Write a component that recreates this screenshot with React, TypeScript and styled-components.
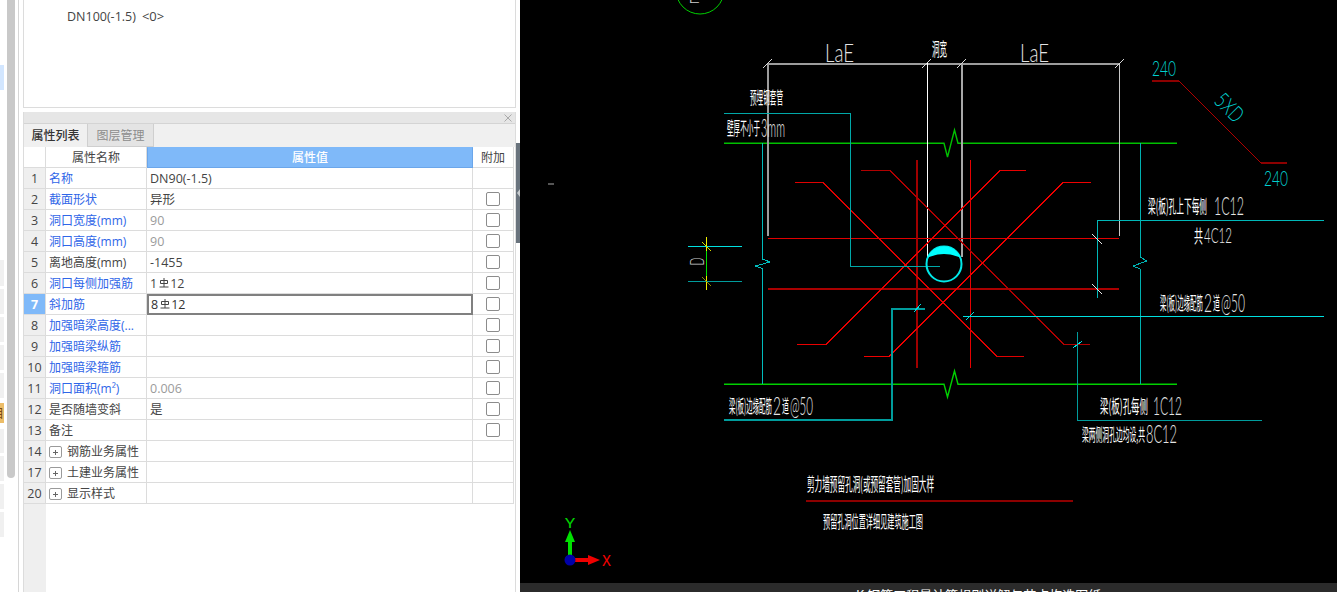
import React from "react";
import styled, { createGlobalStyle } from "styled-components";

const Global = createGlobalStyle`
  html, body { margin: 0; padding: 0; background: #fff; }
  #root { width: 1337px; height: 592px; overflow: hidden; }
`;

const UI_FONT = `"Open Sans", "Noto Sans CJK SC", sans-serif`;
const CJK_FONT = `"Noto Sans CJK SC", sans-serif`;
const THIN_FONT = `"Lato", "Liberation Sans", sans-serif`;

const Page = styled.div`
  display: flex;
  width: 1337px;
  height: 592px;
  overflow: hidden;
  font-family: ${UI_FONT};
  font-size: 12px;
  color: #444;
  background: #fff;
`;

const Rail = styled.div`
  width: 7px;
  height: 592px;
  flex: none;
  display: flex;
  flex-direction: column;
  overflow: hidden;
`;

const RailItem = styled.div<{ $h: number; $top?: number; $bg: string }>`
  width: 4px;
  flex: none;
  height: ${(p) => p.$h}px;
  margin-top: ${(p) => p.$top ?? 3}px;
  background: ${(p) => p.$bg};
  color: #7a4a10;
  font-family: ${CJK_FONT};
  font-size: 12px;
  line-height: 20px;
  overflow: hidden;
  direction: rtl;
`;

const ScrollThumb = styled.div`
  width: 8px;
  height: 478px;
  flex: none;
  background: #c9c9c9;
  border-radius: 0 0 4px 4px;
`;

const Rule = styled.div`
  width: 1px;
  height: 592px;
  flex: none;
  margin: 0 4px 0 3px;
  background: #d6d6d6;
`;

const Column = styled.div`
  width: 493px;
  flex: none;
  display: flex;
  flex-direction: column;
  height: 592px;
`;

const TreePanel = styled.div`
  height: 107px;
  flex: none;
  box-sizing: content-box;
  border: 1px solid #dcdcdc;
  border-top: 0;
  background: #fff;
`;

const TreeItem = styled.div`
  margin: 7px 0 0 43px;
  line-height: 18px;
  font-size: 12.5px;
  color: #444;
`;

const TreeBadge = styled.span`
  margin-left: 6px;
  font-size: 13px;
`;

const PropsPanel = styled.div`
  margin-top: 4px;
  flex: 1;
  min-height: 0;
  display: flex;
  flex-direction: column;
  border: 1px solid #dcdcdc;
  border-bottom: 0;
  border-top: 0;
`;

const TitleBar = styled.div`
  height: 11px;
  flex: none;
  background: #e6e6e6;
  border-bottom: 1px solid #d4d4d4;
  display: flex;
  justify-content: flex-end;
  align-items: center;
  padding-right: 3px;
`;

const TabBar = styled.div`
  height: 23px;
  flex: none;
  display: flex;
  background: #f0f0f0;
`;

const Tab = styled.div<{ $active?: boolean }>`
  box-sizing: border-box;
  width: ${(p) => (p.$active ? 64 : 66)}px;
  height: 23px;
  text-align: center;
  line-height: 22px;
  font-family: ${CJK_FONT};
  font-size: 12px;
  font-weight: ${(p) => (p.$active ? 500 : 400)};
  color: ${(p) => (p.$active ? "#333" : "#8c8c8c")};
  background: ${(p) => (p.$active ? "#f0f0f0" : "#e4e4e4")};
  border-right: 1px solid #cfcfcf;
  border-bottom: ${(p) => (p.$active ? "0" : "1px solid #cfcfcf")};
`;

const Table = styled.div`
  flex: 1;
  min-height: 0;
  display: flex;
  flex-direction: column;
`;

const Row = styled.div`
  display: grid;
  grid-template-columns: 22px 101px 326px 41px;
  height: 21px;
  flex: none;
`;

const Filler = styled.div`
  flex: 1;
  display: grid;
  grid-template-columns: 22px 1fr;
`;

const FillerIndex = styled.div`
  background: #efefef;
`;

const Cell = styled.div`
  box-sizing: border-box;
  height: 21px;
  border-right: 1px solid #dcdcdc;
  border-bottom: 1px solid #dcdcdc;
  line-height: 20px;
  white-space: nowrap;
  overflow: hidden;
  background: #fff;
`;

const IndexCell = styled(Cell)<{ $selected?: boolean; $blank?: boolean }>`
  text-align: center;
  background: ${(p) => (p.$blank ? "#fff" : p.$selected ? "#7fb9f9" : "#efefef")};
  color: ${(p) => (p.$selected ? "#fff" : "#444")};
  font-weight: ${(p) => (p.$selected ? 700 : 400)};
  font-size: 12.5px;
  line-height: 22px;
`;

const HeadCell = styled(Cell)`
  text-align: center;
  font-family: ${CJK_FONT};
  color: #444;
`;

const ValueHead = styled(HeadCell)`
  background: #7fb9f9;
  border: 1px solid #6ba6ea;
  border-top-color: #7fb9f9;
  color: #fff;
  font-weight: 500;
  line-height: 18px;
`;

const NameCell = styled(Cell)<{ $tone: "blue" | "dark" }>`
  padding: 2px 0 0 3px;
  display: flex;
  align-items: center;
  color: ${(p) => (p.$tone === "blue" ? "#2f66e8" : "#444")};
`;

const ValueCell = styled(Cell)<{ $muted?: boolean; $editing?: boolean }>`
  padding: ${(p) => (p.$editing ? "0 0 0 2px" : "2px 0 0 3px")};
  color: ${(p) => (p.$muted ? "#9b9b9b" : "#444")};
  font-size: 12.5px;
  display: flex;
  align-items: center;
  ${(p) => p.$editing && "border: 2px solid #808080; color: #333;"}
`;

const CheckCell = styled(Cell)`
  display: flex;
  align-items: center;
  justify-content: center;
`;

const Check = styled.input`
  appearance: none;
  box-sizing: border-box;
  width: 14px;
  height: 14px;
  margin: 0;
  background: #fff;
  border: 1px solid #8c8c8c;
  border-radius: 2px;
`;

const Expand = styled.span`
  position: relative;
  box-sizing: border-box;
  flex: none;
  width: 13px;
  height: 12px;
  margin-right: 5px;
  border: 1px solid #9a9a9a;
  border-radius: 2px;
  &::before, &::after {
    content: "";
    position: absolute;
    background: #666;
  }
  &::before { left: 3px; top: 4.5px; width: 5px; height: 1px; }
  &::after { left: 5px; top: 2.5px; width: 1px; height: 5px; }
`;

const RebarGlyph = styled.svg`
  width: 10px;
  height: 10px;
  margin: 0 1px 2px 2px;
  flex: none;
`;

const Splitter = styled.div`
  width: 4px;
  flex: none;
  padding-top: 143px;
`;

const Handle = styled.div`
  height: 100px;
  background: #69737d;
  display: flex;
  align-items: center;
  justify-content: center;
  &::before {
    content: "";
    border: 4px solid transparent;
    border-left: 0;
    border-right: 3px solid #c8ccd0;
  }
`;

const Canvas = styled.div`
  flex: 1;
  display: flex;
  flex-direction: column;
  background: #000;
  min-width: 0;
`;

const Drawing = styled.svg`
  display: block;
  width: 817px;
  height: 583px;
  flex: none;
`;

const StatusBar = styled.div`
  flex: 1;
  background: #2b2b2b;
  overflow: hidden;
  padding: 4px 0 0 336px;
  color: #fff;
  font-family: ${CJK_FONT};
  font-size: 13px;
  line-height: 16px;
  white-space: nowrap;
`;

const CadGlyphs = styled.text<{ $ink?: string; $thin?: boolean }>`
  fill: ${(p) => p.$ink ?? "#fff"};
  font-family: ${(p) => (p.$thin ? THIN_FONT : CJK_FONT)};
  font-weight: ${(p) => (p.$thin ? 300 : 400)};
`;

const CadRun = styled.tspan<{ $latin?: boolean }>`
  fill: ${(p) => (p.$latin ? "#e4e4e4" : "#fff")};
  font-family: ${(p) => (p.$latin ? THIN_FONT : CJK_FONT)};
  font-weight: ${(p) => (p.$latin ? 300 : 400)};
`;

type LabelProps = {
  x?: number;
  y?: number;
  w: number;
  s: number;
  ink?: string;
  thin?: boolean;
  transform?: string;
  children: React.ReactNode;
};

function Label({ x, y, w, s, ink, thin, transform, children }: LabelProps) {
  return (
    <CadGlyphs
      x={x ?? 0}
      y={y ?? 0}
      transform={transform}
      textLength={w}
      lengthAdjust="spacingAndGlyphs"
      fontSize={s}
      $ink={ink}
      $thin={thin}
    >
      {children}
    </CadGlyphs>
  );
}

type Run = { x: number; y: number; w: number; s: number; t: string; latin?: boolean };

function MixedLabel({ runs }: { runs: Run[] }) {
  return (
    <CadGlyphs>
      {runs.map((r) => (
        <CadRun
          key={r.x}
          x={r.x}
          y={r.y}
          textLength={r.w}
          lengthAdjust="spacingAndGlyphs"
          fontSize={r.s}
          $latin={r.latin}
        >
          {r.t}
        </CadRun>
      ))}
    </CadGlyphs>
  );
}

function Rebar() {
  return (
    <RebarGlyph viewBox="0 0 10 10" fill="none" stroke="#444" strokeWidth="1">
      <path d="M5 0V9M1.5 2.5H8.5V5.5H1.5ZM.5 9H9.5" />
    </RebarGlyph>
  );
}

type RowData = {
  n: number;
  name: React.ReactNode;
  blue?: boolean;
  value?: React.ReactNode;
  muted?: boolean;
  check?: boolean;
  group?: boolean;
  editing?: boolean;
};

const rows: RowData[] = [
  { n: 1, name: "名称", blue: true, value: "DN90(-1.5)" },
  { n: 2, name: "截面形状", blue: true, value: "异形", check: true },
  { n: 3, name: "洞口宽度(mm)", blue: true, value: "90", muted: true, check: true },
  { n: 4, name: "洞口高度(mm)", blue: true, value: "90", muted: true, check: true },
  { n: 5, name: "离地高度(mm)", value: "-1455", check: true },
  { n: 6, name: "洞口每侧加强筋", blue: true, value: <>1<Rebar />12</>, check: true },
  { n: 7, name: "斜加筋", blue: true, value: <>8<Rebar />12</>, check: true, editing: true },
  { n: 8, name: "加强暗梁高度(...", blue: true, check: true },
  { n: 9, name: "加强暗梁纵筋", blue: true, check: true },
  { n: 10, name: "加强暗梁箍筋", blue: true, check: true },
  { n: 11, name: "洞口面积(m²)", blue: true, value: "0.006", muted: true, check: true },
  { n: 12, name: "是否随墙变斜", value: "是", check: true },
  { n: 13, name: "备注", check: true },
  { n: 14, name: "钢筋业务属性", group: true },
  { n: 17, name: "土建业务属性", group: true },
  { n: 20, name: "显示样式", group: true },
];

const railUpper = [26, 25, 25, 25, 25];
const railLower = [24, 25, 25, 25];

type Seg = [string, string, number?];
const softSegs: Seg[] = [
  ["M724 143.3H944L947.5 157L954.5 130L958 143.3H1177", "#00c000", 1.4],
  ["M724 384.3H944L947.5 397L954.5 371L958 384.3H1177", "#00d000", 1.4],
];
const segs: Seg[] = [
  ["M767 63.5H1120", "#9c9c9c", 2],
  ["M768 63V236", "#9c9c9c", 2],
  ["M927 63V257", "#ffffff", 1],
  ["M962 63V257", "#a8a8a8", 2],
  ["M1119.5 63V236", "#c8c8c8", 1],
  ["M763 68L772 59M922 68L931 59M957 68L966 59M1115 68L1124 59", "#d8d8d8", 1],
  ["M762.5 143V259L770 262L755.5 266L762.5 268.500V384", "#00bcbc", 1],
  ["M1140 143V257L1147 261L1133 266L1140 269V384", "#00b0b0", 1],
  ["M768 238.500H1119", "#e00000", 1],
  ["M768 289H1119", "#aa0000", 2],
  ["M917 160V368", "#a00000", 2],
  ["M970.5 160V368", "#e60000", 1],
  ["M795 182.500H823L997 356.500H1024", "#e00000", 1],
  ["M861 170.500H890L1064 344.500H1090", "#b00000", 1],
  ["M1091 182.500H1063L889 356.500H864", "#f00000", 1],
  ["M1026 170.500H1000L826 344.500H797", "#e80000", 1],
  ["M724 113.500H850.500V266H940", "#00a8a8", 1],
  ["M724 419.500H892V308.500H925", "#009c9c", 2],
  ["M1097 298V220.500H1324", "#00b8b8", 1],
  ["M963 316.500H1324", "#00e0e0", 1],
  ["M1077 332V420H1262", "#009c9c", 1],
  ["M1092 234L1102 244M1092 284L1102 294", "#e8e8e8", 1],
  ["M914 312L921 304", "#00e0e0", 1],
  ["M966 320L974 312", "#00e0e0", 1],
  ["M1073 348L1082 341", "#00e0e0", 1],
  ["M688 246.500H742", "#00e0e0", 1],
  ["M688 281H742", "#009c9c", 1],
  ["M706.500 237V251", "#f0f000", 1],
  ["M706.500 251V276", "#00e000", 1],
  ["M706.500 276V290", "#f0f000", 1],
  ["M702 242L711 251", "#d8d800", 1],
  ["M702 277L711 286", "#8c8c00", 1],
  ["M1152 81H1179", "#8c0000", 2],
  ["M1179 81L1261 163", "#b00000", 1],
  ["M1261 163H1287", "#8c0000", 2],
  ["M806 501H1073", "#8c0000", 2],
];

const LATIN = "#e4e4e4";
const CYAN = "#00d0d0";

export default function App() {
  return (
    <Page>
      <Global />
      <Rail>
        <RailItem $h={25} $top={65} $bg="#d2e6ff" />
        {railUpper.map((h, i) => (
          <RailItem key={i} $h={h} $top={i === 0 ? 170 : 3} $bg="#f0f0f0" />
        ))}
        <RailItem $h={20} $top={5} $bg="#ecbd68">目</RailItem>
        {railLower.map((h, i) => (
          <RailItem key={i} $h={h} $top={i === 0 ? 6 : 3} $bg="#f0f0f0" />
        ))}
      </Rail>
      <ScrollThumb />
      <Rule />
      <Column>
        <TreePanel>
          <TreeItem>
            DN100(-1.5)<TreeBadge>&lt;0&gt;</TreeBadge>
          </TreeItem>
        </TreePanel>
        <PropsPanel>
          <TitleBar>
            <svg width="8" height="8" viewBox="0 0 8 8" stroke="#aaa" strokeWidth="1">
              <path d="M.5 .5L7.500 7.500M7.500 .5L.5 7.500" />
            </svg>
          </TitleBar>
          <TabBar>
            <Tab $active>属性列表</Tab>
            <Tab>图层管理</Tab>
          </TabBar>
          <Table>
            <Row>
              <IndexCell $blank />
              <HeadCell>属性名称</HeadCell>
              <ValueHead>属性值</ValueHead>
              <HeadCell>附加</HeadCell>
            </Row>
            {rows.map((r) => (
              <Row key={r.n}>
                <IndexCell $selected={r.editing}>{r.n}</IndexCell>
                <NameCell $tone={r.blue ? "blue" : "dark"}>
                  {r.group && <Expand />}
                  {r.name}
                </NameCell>
                <ValueCell $muted={r.muted} $editing={r.editing}>
                  {r.value}
                </ValueCell>
                <CheckCell>{r.check && <Check type="checkbox" readOnly tabIndex={-1} />}</CheckCell>
              </Row>
            ))}
            <Filler>
              <FillerIndex />
            </Filler>
          </Table>
        </PropsPanel>
      </Column>
      <Splitter>
        <Handle />
      </Splitter>
      <Canvas>
        <Drawing viewBox="520 0 817 583" fill="none">
          <circle cx="700" cy="-10" r="24" stroke="#00d000" strokeWidth="1" />
          <Label x={688} y={3} w={12} s={18} ink="#cccccc" thin>E</Label>
          <rect x="548" y="183" width="6" height="2" fill="#555" />
          {softSegs.map(([d, c, w], i) => (
            <path key={i} d={d} stroke={c} strokeWidth={w ?? 1} />
          ))}
          <g shapeRendering="crispEdges">
            {segs.map(([d, c, w], i) => (
              <path key={i} d={d} stroke={c} strokeWidth={w ?? 1} />
            ))}
          </g>
          <circle cx="944" cy="264" r="17.500" stroke="#00e8e8" strokeWidth="2" />
          <path d="M927.400 257.500A18 18 0 0 1 960.600 257.500Q944 250.500 927.400 257.500Z" fill="#00ffff" />

          <Label x={825} y={62} w={29} s={26} ink={LATIN} thin>LaE</Label>
          <Label x={1020} y={62} w={29} s={26} ink={LATIN} thin>LaE</Label>
          <Label x={932} y={56} w={15} s={18}>洞宽</Label>
          <Label x={750} y={104} w={33} s={17}>预埋钢套管</Label>
          <MixedLabel runs={[
            { x: 727, y: 135, w: 33, s: 18, t: "壁厚不小于" },
            { x: 761, y: 137, w: 24, s: 25, t: "3mm", latin: true },
          ]} />

          <Label x={1152} y={76} w={24} s={22} ink={CYAN} thin>240</Label>
          <Label x={1264} y={186} w={24} s={22} ink={CYAN} thin>240</Label>
          <Label transform="translate(1213 102) rotate(45)" w={31} s={22} ink={CYAN} thin>5XD</Label>

          <MixedLabel runs={[
            { x: 1148, y: 213, w: 59, s: 18, t: "梁(板)孔上下每侧" },
            { x: 1214, y: 215, w: 30, s: 25, t: "1C12", latin: true },
          ]} />
          <MixedLabel runs={[
            { x: 1194, y: 243, w: 9, s: 18, t: "共" },
            { x: 1204, y: 243, w: 28, s: 22, t: "4C12", latin: true },
          ]} />
          <MixedLabel runs={[
            { x: 1160, y: 310, w: 43, s: 18, t: "梁(板)边缘配筋" },
            { x: 1204, y: 312, w: 8, s: 26, t: "2", latin: true },
            { x: 1213, y: 310, w: 7, s: 18, t: "道" },
            { x: 1221, y: 312, w: 24, s: 26, t: "@50", latin: true },
          ]} />
          <MixedLabel runs={[
            { x: 729, y: 413, w: 43, s: 18, t: "梁(板)边缘配筋" },
            { x: 773, y: 415, w: 8, s: 26, t: "2", latin: true },
            { x: 782, y: 413, w: 7, s: 18, t: "道" },
            { x: 790, y: 415, w: 23, s: 26, t: "@50", latin: true },
          ]} />
          <MixedLabel runs={[
            { x: 1100, y: 413, w: 48, s: 18, t: "梁(板)孔每侧" },
            { x: 1153, y: 415, w: 29, s: 25, t: "1C12", latin: true },
          ]} />
          <MixedLabel runs={[
            { x: 1082, y: 441, w: 63, s: 17, t: "梁两侧洞孔边均设,共" },
            { x: 1146, y: 443, w: 31, s: 25, t: "8C12", latin: true },
          ]} />

          <Label transform="translate(704 265.500) rotate(-90)" w={8} s={19} ink="#cccccc" thin>D</Label>

          <Label x={807} y={491} w={127} s={18}>剪力墙预留孔洞(或预留套管)加固大样</Label>
          <Label x={823} y={528} w={100} s={17}>预留孔洞位置详细见建筑施工图</Label>

          <path d="M570 560V541" stroke="#00e000" strokeWidth="4" />
          <path d="M570 530L575 542H565Z" fill="#00e000" />
          <path d="M570 560H589" stroke="#f00000" strokeWidth="4" />
          <path d="M600 560L588 555V565Z" fill="#f00000" />
          <circle cx="570" cy="560" r="5.500" fill="#0000a8" />
          <Label x={565} y={528} w={10} s={13} ink="#00d000">Y</Label>
          <Label x={602} y={566} w={9} s={15} ink="#f00000">X</Label>
        </Drawing>
        <StatusBar>K 钢筋工程量计算规则详解与节点构造图纸</StatusBar>
      </Canvas>
    </Page>
  );
}
